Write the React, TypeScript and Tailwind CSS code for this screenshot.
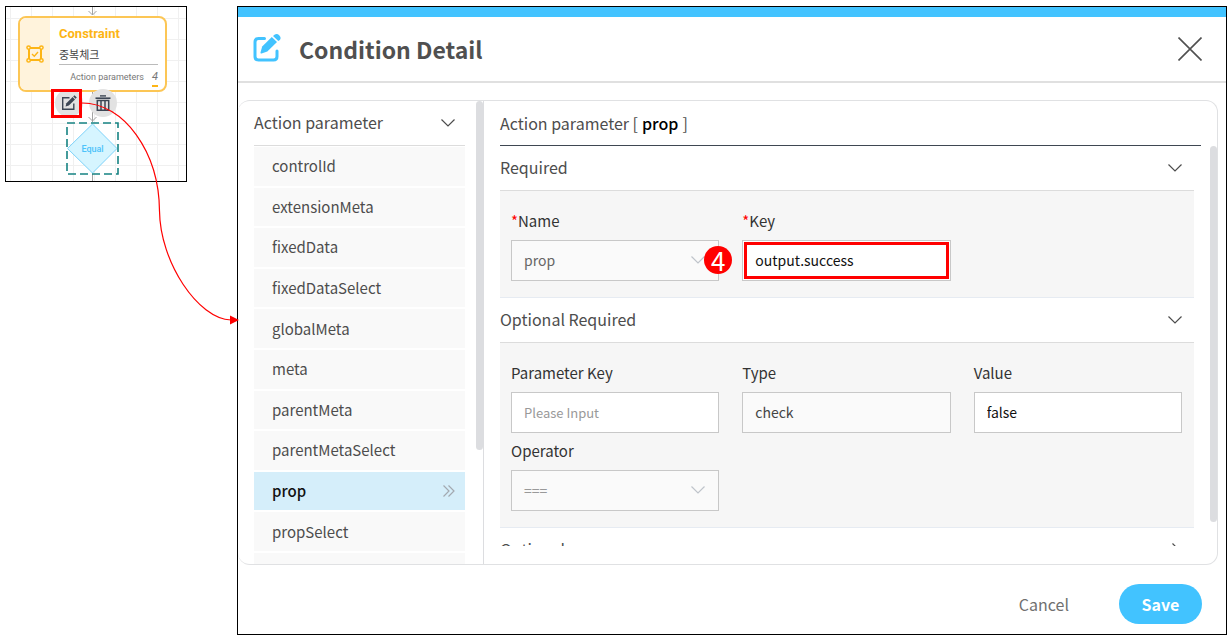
import React from "react";

const PARAMETERS = [
  "controlId",
  "extensionMeta",
  "fixedData",
  "fixedDataSelect",
  "globalMeta",
  "meta",
  "parentMeta",
  "parentMetaSelect",
  "prop",
  "propSelect",
];

const ChevronDown: React.FC<{ className?: string }> = ({ className }) => (
  <svg viewBox="0 0 14 8" fill="none" stroke="currentColor" strokeWidth="1.2" className={className} aria-hidden="true">
    <path d="M0.5 0.5 L7 7 L13.5 0.5" />
  </svg>
);

const ChevronRight: React.FC<{ className?: string }> = ({ className }) => (
  <svg viewBox="0 0 8 14" fill="none" stroke="currentColor" strokeWidth="1.2" className={className} aria-hidden="true">
    <path d="M0.5 0.5 L7 7 L0.5 13.5" />
  </svg>
);

const DoubleChevron = () => (
  <svg viewBox="0 0 12 12" fill="none" stroke="currentColor" strokeWidth="1.2" className="w-3 h-3" aria-hidden="true">
    <path d="M0.5 0.5 L6 6 L0.5 11.5 M5.5 0.5 L11 6 L5.5 11.5" />
  </svg>
);

const EditIcon: React.FC<{ className?: string }> = ({ className }) => (
  <svg viewBox="0 0 28 28" className={className} aria-hidden="true">
    <path
      d="M11.5 4.5 H5.5 Q2 4.5 2 8 V22.5 Q2 26 5.5 26 H20.5 Q24 26 24 22.5 V17"
      fill="none"
      stroke="currentColor"
      strokeWidth="3"
      strokeLinecap="round"
    />
    <path d="M7.5 18.5 L9.2 12.4 L18.8 2.9 L24 8.1 L14.3 17.6 L8.6 19.5 Q7.2 19.8 7.5 18.5 Z" fill="currentColor" />
    <path d="M20 1.9 L21.5 0.7 Q24 -0.9 26.4 1.4 Q28.6 3.8 26.8 5.9 L25.3 7.1 Z" fill="currentColor" />
  </svg>
);

const SmallEditIcon = () => (
  <svg viewBox="0 0 16 16" className="w-4 h-4" aria-hidden="true">
    <path d="M8.5 2.7 H1.7 V14.3 H12.8 V8.5" fill="none" stroke="currentColor" strokeWidth="1.4" />
    <path d="M4.6 11.4 L5.4 8.2 L11.6 2 L14 4.4 L7.8 10.6 Z" fill="currentColor" />
    <path d="M12.2 1.4 L13.4 0.2 L15.8 2.6 L14.6 3.8 Z" fill="currentColor" />
  </svg>
);

const TrashIcon = () => (
  <svg viewBox="0 0 16 16" className="w-4 h-4" fill="none" stroke="currentColor" aria-hidden="true">
    <path d="M0.5 3.2 H15.5" strokeWidth="1.6" />
    <path d="M5 0.9 H11" strokeWidth="1.4" />
    <path d="M2.3 5.5 V15.2 H13.7 V5.5 Z M6 5.5 V15 M10 5.5 V15" strokeWidth="1.5" />
  </svg>
);

const ConstraintIcon = () => (
  <svg viewBox="0 0 18 18" className="w-[18px] h-[18px] text-[#fdb515]" fill="none" stroke="currentColor" aria-hidden="true">
    <path d="M3 3 H15 V15 H3 Z" strokeWidth="2" />
    <path d="M6 9 L8.3 11.2 L12 7" strokeWidth="1.4" />
    <g fill="#fff3dc" strokeWidth="1.5">
      <circle cx="2.6" cy="2.6" r="1.7" />
      <circle cx="15.4" cy="2.6" r="1.7" />
      <circle cx="2.6" cy="15.4" r="1.7" />
      <circle cx="15.4" cy="15.4" r="1.7" />
    </g>
  </svg>
);

// Flow canvas with the constraint node and the condition below it
const FlowCanvas = () => (
  <section
    aria-label="Flow"
    className="relative w-[182px] h-[176px] shrink-0 border border-black bg-white bg-[linear-gradient(#f0f0f0_1px,transparent_1px),linear-gradient(90deg,#f0f0f0_1px,transparent_1px)] bg-[size:21px_21px] bg-[position:4px_11px]"
  >
    <svg viewBox="0 0 180 174" className="absolute inset-0 w-full h-full" fill="none" stroke="#a3a3a3" aria-hidden="true">
      <path d="M86.5 0 V8 M82.5 4 L86.5 8 L90.5 4 M86.5 85 V115 M82.5 110 L86.5 114 L90.5 110 M86.5 167 V174" />
    </svg>
    <div className="absolute left-3 top-[9px] flex w-[149px] h-[76px] overflow-hidden rounded-lg border-2 border-[#fcc655] bg-white">
      <div className="flex w-[30px] items-center justify-center bg-[#fff3dc]">
        <ConstraintIcon />
      </div>
      <div className="flex flex-1 flex-col pl-[9px] pr-[7px] pt-2">
        <h2 className="font-['Roboto',sans-serif] text-[13px] leading-4 font-bold text-[#fdb515]">Constraint</h2>
        <p className="pt-1 text-[11px] leading-4 text-[#444]">중복체크</p>
        <div className="mt-0.5 flex items-start justify-end gap-2 border-t border-[#bbb] pt-1 font-['Roboto',sans-serif] text-[9px] leading-4 text-[#777]">
          <span>Action parameters</span>
          <span className="border-b-2 border-[#fdb515] text-[11px] italic">4</span>
        </div>
      </div>
    </div>
    <div className="absolute left-[49px] top-[82px] flex gap-1.5 text-[#3c4654]">
      <button type="button" aria-label="Edit" className="flex w-7 h-7 items-center justify-center rounded-full bg-[#e2e2e2]">
        <SmallEditIcon />
      </button>
      <button type="button" aria-label="Delete" className="flex w-7 h-7 items-center justify-center rounded-full bg-[#e2e2e2]">
        <TrashIcon />
      </button>
    </div>
    <div className="absolute left-[45px] top-[82px] w-[31px] h-[29px] border-3 border-[#f00]" />
    <div className="absolute left-[60px] top-[115px] flex w-[53px] h-[53px] items-center justify-center">
      <svg viewBox="0 0 53 53" className="absolute inset-0 w-full h-full" aria-hidden="true">
        <path d="M26.5 2 L51 26.5 L26.5 51 L1.5 26.5 Z" fill="#d6f5ff" stroke="#7dd3fa" />
        <rect x="1" y="1" width="51" height="51" fill="none" stroke="#168383" strokeWidth="1.6" strokeDasharray="8 4" />
      </svg>
      <span className="relative font-['Roboto',sans-serif] text-[9px] leading-3 font-medium text-[#4dc3fa]">Equal</span>
    </div>
  </section>
);

const fieldClass = "w-full h-[41px] border border-[#c8c8c8] px-3 pb-0.5 text-[14px] leading-6 outline-none";

interface FieldProps {
  id: string;
  label: string;
  required?: boolean;
  children: React.ReactNode;
}

const Field: React.FC<FieldProps> = ({ id, label, required, children }) => (
  <div className="flex flex-col gap-2">
    <label htmlFor={id} className="text-[15px] leading-[22px] text-[#333]">
      {required && <span className="text-[#f00]">*</span>}
      {label}
    </label>
    <div className="relative">{children}</div>
  </div>
);

const SelectBox: React.FC<{ id: string; value: string; className: string }> = ({ id, value, className }) => (
  <>
    <select id={id} defaultValue={value} className={`${fieldClass} appearance-none bg-[#fafafa] ${className}`}>
      <option value={value}>{value}</option>
    </select>
    <ChevronDown className="pointer-events-none absolute right-[14px] top-4 w-[14px] h-2 text-[#bfc4cb]" />
  </>
);

const Section: React.FC<{ title: string; children?: React.ReactNode }> = ({ title, children }) => (
  <section>
    <button
      type="button"
      aria-expanded={Boolean(children)}
      className="flex w-full h-11 items-center justify-between pr-3 pb-0.5 text-base leading-6 text-[#4d4d4d]"
    >
      {title}
      {children ? <ChevronDown className="mt-0.5 w-[14px] h-2" /> : <ChevronRight className="mr-0.5 mt-0.5 w-2 h-[14px]" />}
    </button>
    {children && (
      <div className="grid grid-cols-3 gap-x-[23px] gap-y-[7px] border-t border-b border-t-[#dcdcdc] border-b-[#e6ebf2] bg-[#f6f6f6] pt-[19px] pb-4 pl-[11px] pr-3">
        {children}
      </div>
    )}
  </section>
);

const ParameterList = () => (
  <nav className="relative w-[246px] shrink-0 border-r border-[#dcdde0] pl-4 pr-[18px]">
    <button type="button" className="flex w-full h-11 items-center justify-between pr-[10px] pb-0.5 text-base leading-6 text-[#4d4d4d]">
      Action parameter
      <ChevronDown className="mt-0.5 w-[14px] h-2" />
    </button>
    <div className="flex h-[419px] flex-col border-t border-[#dcdcdc]">
      <ul className="mt-px flex h-[406px] flex-col">
        {PARAMETERS.map((name) => (
          <li key={name} className="flex-1 border-b-2 border-white">
            <a
              href={`#${name}`}
              className={
                name === "prop"
                  ? "flex h-full items-center justify-between bg-[#d5eefa] pl-[18px] pr-[10px] text-[15px] leading-6 font-medium text-[#111]"
                  : "flex h-full items-center bg-[#f9f9f9] pl-[18px] text-[15px] leading-6 text-[#4d4d4d]"
              }
            >
              {name}
              {name === "prop" && (
                <span className="text-[#a3a9b0]">
                  <DoubleChevron />
                </span>
              )}
            </a>
          </li>
        ))}
      </ul>
      <div className="flex-1 bg-[#f9f9f9]" />
    </div>
    <div className="absolute right-0 top-0 w-[7px] h-[349px] rounded-full bg-[#dcdde0]" />
  </nav>
);

const ParameterDetail = () => (
  <div className="relative flex-1 min-w-0 pl-4 pr-4">
    <h2 className="flex h-[45px] items-center gap-1 border-b border-[#3f4752] text-base leading-6 text-[#4d4d4d]">
      Action parameter [ <strong className="font-medium text-black">prop</strong> ]
    </h2>
    <div className="h-[400px] overflow-hidden pr-[7px]">
      <Section title="Required">
        <Field id="name" label="Name" required>
          <SelectBox id="name" value="prop" className="text-[#666]" />
        </Field>
        <Field id="key" label="Key" required>
          <input id="key" defaultValue="output.success" className={`${fieldClass} bg-white text-[#111]`} />
          <div className="pointer-events-none absolute inset-x-[2px] inset-y-[2px] border-3 border-[#f00]" />
          <span className="absolute -left-[38px] top-[6px] flex w-7 h-7 items-center justify-center rounded-full bg-[#f00] text-[26px] leading-7 text-white">
            4
          </span>
        </Field>
      </Section>
      <Section title="Optional Required">
        <Field id="parameter-key" label="Parameter Key">
          <input
            id="parameter-key"
            placeholder="Please Input"
            className="w-full h-[41px] border border-[#c8c8c8] bg-white px-3 text-[13px] leading-6 outline-none placeholder:text-[#999]"
          />
        </Field>
        <Field id="type" label="Type">
          <input id="type" defaultValue="check" readOnly className={`${fieldClass} bg-[#fafafa] text-[#444]`} />
        </Field>
        <Field id="value" label="Value">
          <input id="value" defaultValue="false" className={`${fieldClass} bg-white text-[#111]`} />
        </Field>
        <Field id="operator" label="Operator">
          <SelectBox id="operator" value="===" className="text-[#999]" />
        </Field>
      </Section>
      <Section title="Optional" />
    </div>
    <div className="absolute right-0 top-[45px] w-[7px] h-[376px] rounded-full bg-[#dcdde0]" />
  </div>
);

const ConditionDialog = () => (
  <section
    role="dialog"
    aria-labelledby="dialog-title"
    className="flex flex-1 min-w-0 flex-col border border-black bg-white"
  >
    <div className="h-[10px] bg-[#42c3ff]" />
    <header className="flex h-[66px] items-center border-b-2 border-[#e0e0e0] pl-[15px] pr-6">
      <EditIcon className="mb-0.5 w-7 h-7 overflow-visible text-[#42c3ff]" />
      <h1 id="dialog-title" className="flex-1 pl-[18px] text-[23px] leading-8 font-bold text-[#505050]">
        Condition Detail
      </h1>
      <button type="button" aria-label="Close">
        <svg viewBox="0 0 24 24" className="w-6 h-6" fill="none" stroke="#505050" strokeWidth="1.6">
          <path d="M0.5 0.5 L23.5 23.5 M23.5 0.5 L0.5 23.5" />
        </svg>
      </button>
    </header>
    <div className="mt-[17px] mr-2 flex h-[465px] overflow-hidden rounded-xl border border-l-0 border-[#e0e1e3]">
      <ParameterList />
      <ParameterDetail />
    </div>
    <footer className="flex items-center justify-end gap-[50px] pt-[19px] pr-6 pb-[10px] text-base leading-6">
      <button type="button" className="text-[#707070]">
        Cancel
      </button>
      <button type="button" className="w-[83px] h-10 rounded-full bg-[#42c3ff] font-bold text-white">
        Save
      </button>
    </footer>
  </section>
);

export default function App() {
  return (
    <main className="relative flex items-start gap-[50px] bg-white pt-[6px] pr-[5px] pb-1 pl-[5px] font-['Noto_Sans_CJK_KR',sans-serif]">
      <FlowCanvas />
      <ConditionDialog />
      {/* connector from the edit button to the dialog */}
      <svg viewBox="0 0 240 330" className="pointer-events-none absolute left-0 top-0 w-[240px] h-[330px]" aria-hidden="true">
        <path d="M82 103 C124 103 159 152 159.5 211 C160 262 198 319 231 320" fill="none" stroke="#f00" strokeWidth="1.2" />
        <path d="M230 315.5 L239 320 L230 324.5 Z" fill="#f00" />
      </svg>
    </main>
  );
}
